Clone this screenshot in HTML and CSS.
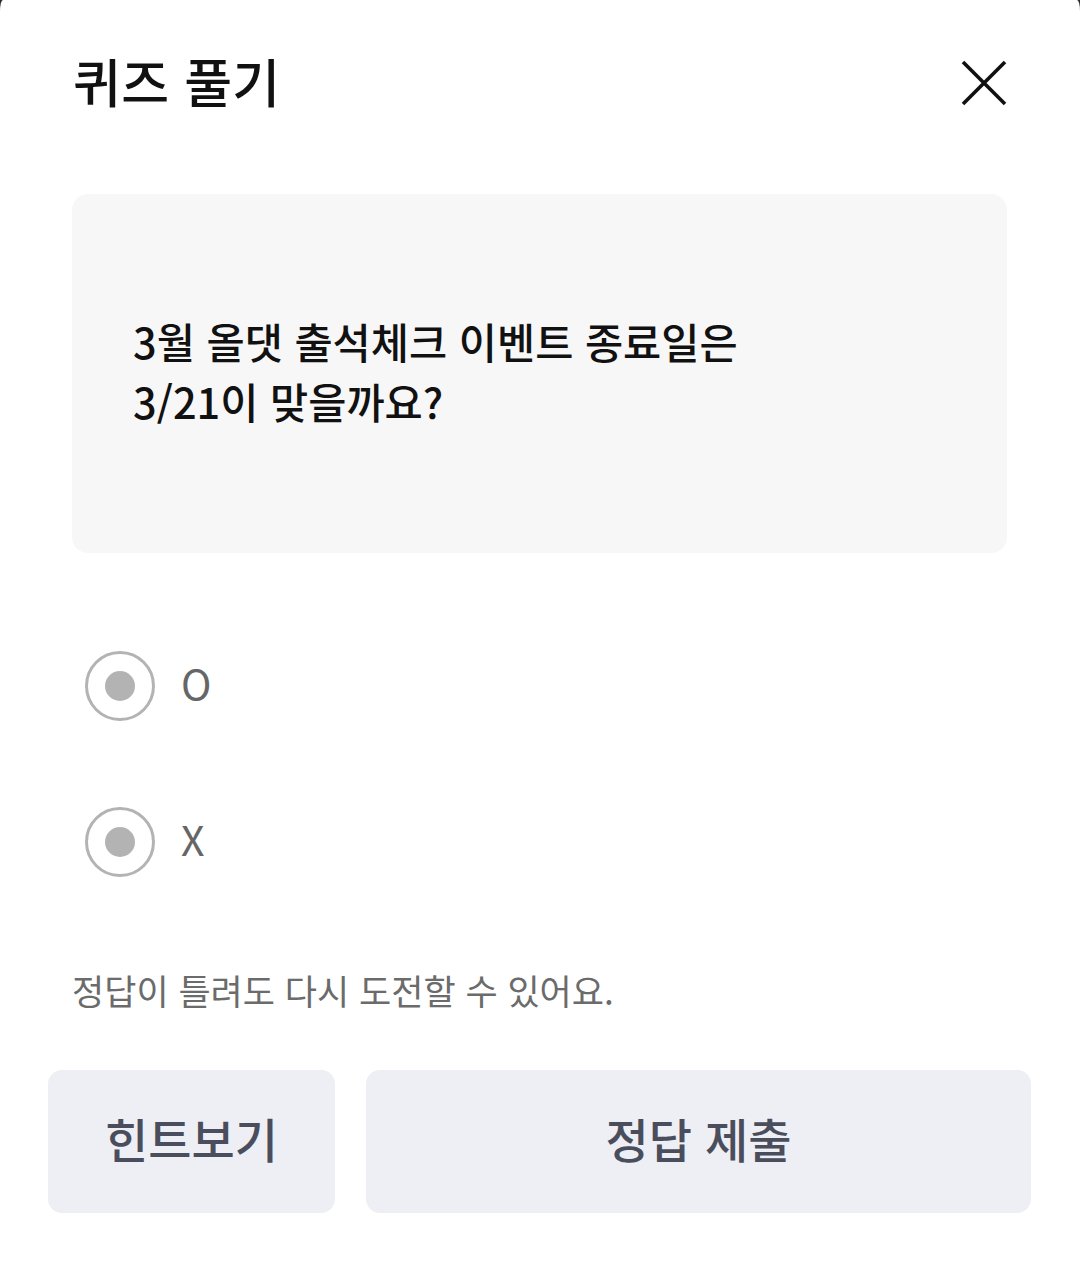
FILE: index.html
```html
<!DOCTYPE html>
<html lang="ko">
<head>
<meta charset="utf-8">
<title>퀴즈 풀기</title>
<link rel="stylesheet" href="styles.css">
</head>
<body>
<div class="sheet">
  <header class="header">
    <h1 class="title">퀴즈 풀기</h1>
    <button class="close" aria-label="닫기">
      <svg width="46" height="46" viewBox="0 0 46 46"><path d="M2 2 L44 44 M44 2 L2 44" stroke="#111" stroke-width="3.6" stroke-linecap="butt" fill="none"/></svg>
    </button>
  </header>
  <div class="question-wrap">
    <div class="question">
      <p class="question-text">3월 올댓 출석체크 이벤트 종료일은<br>3/21이 맞을까요?</p>
    </div>
  </div>
  <div class="options">
    <label class="option"><span class="radio"><span class="dot"></span></span><span class="option-label">O</span></label>
    <label class="option"><span class="radio"><span class="dot"></span></span><span class="option-label">X</span></label>
  </div>
  <p class="notice">정답이 틀려도 다시 도전할 수 있어요.</p>
  <div class="actions">
    <button class="btn btn-hint">힌트보기</button>
    <button class="btn btn-submit">정답 제출</button>
  </div>
</div>
</body>
</html>
```

FILE: styles.css
```css
* { box-sizing: border-box; }
html, body {
  margin: 0;
  padding: 0;
  background: #2b2b2b;
}
body {
  font-family: "Noto Sans CJK KR", "Noto Sans", sans-serif;
  width: 1080px;
  height: 1262px;
  overflow: hidden;
}
.sheet {
  background: #fff;
  height: 1262px;
  border-radius: 3px 3px 0 0 / 11px 11px 0 0;
  display: flex;
  flex-direction: column;
}
.header {
  margin-top: 36px;
  height: 90px;
  padding: 0 73px 0 73px;
  display: flex;
  align-items: center;
  justify-content: space-between;
}
.title {
  margin: 0;
  font-size: 52px;
  font-weight: 500;
  line-height: 1;
  color: #111;
  letter-spacing: 0.3px;
}
.close {
  border: 0;
  background: none;
  padding: 0;
  width: 46px;
  height: 46px;
  display: flex;
  margin-top: 4px;
}
.question-wrap {
  margin-top: 68px;
  padding: 0 73px 0 72px;
}
.question {
  height: 359px;
  background: #f7f7f7;
  border-radius: 16px;
  padding: 0 61px 6px;
  display: flex;
  align-items: center;
}
.question-text {
  margin: 0;
  font-size: 41.5px;
  font-weight: 500;
  line-height: 60px;
  color: #111;
  letter-spacing: 0;
}
.options {
  margin-top: 55px;
  padding-left: 85px;
  display: flex;
  flex-direction: column;
}
.option {
  height: 156px;
  display: flex;
  align-items: center;
  gap: 26px;
}
.radio {
  width: 70px;
  height: 70px;
  border: 3px solid #b3b3b3;
  border-radius: 50%;
  display: flex;
  align-items: center;
  justify-content: center;
}
.dot {
  width: 30px;
  height: 30px;
  border-radius: 50%;
  background: #b3b3b3;
}
.option-label {
  font-size: 41px;
  font-weight: 400;
  color: #666;
  line-height: 1;
  margin-bottom: 8px;
}
.notice {
  margin: 47px 0 0;
  padding-left: 72px;
  font-size: 35px;
  line-height: 46px;
  color: #6b6b6b;
  letter-spacing: 0;
}
.actions {
  margin-top: 57px;
  padding: 0 49px 0 48px;
  display: flex;
  gap: 31px;
}
.btn {
  height: 143px;
  border: 0;
  border-radius: 14px;
  background: #eeeff4;
  color: #4a4e5c;
  font-family: "Noto Sans CJK KR", "Noto Sans", sans-serif;
  font-size: 47px;
  font-weight: 500;
  letter-spacing: 0;
  padding: 0 0 8px;
}
.btn-hint { width: 287px; }
.btn-submit { flex: 1; }
```
